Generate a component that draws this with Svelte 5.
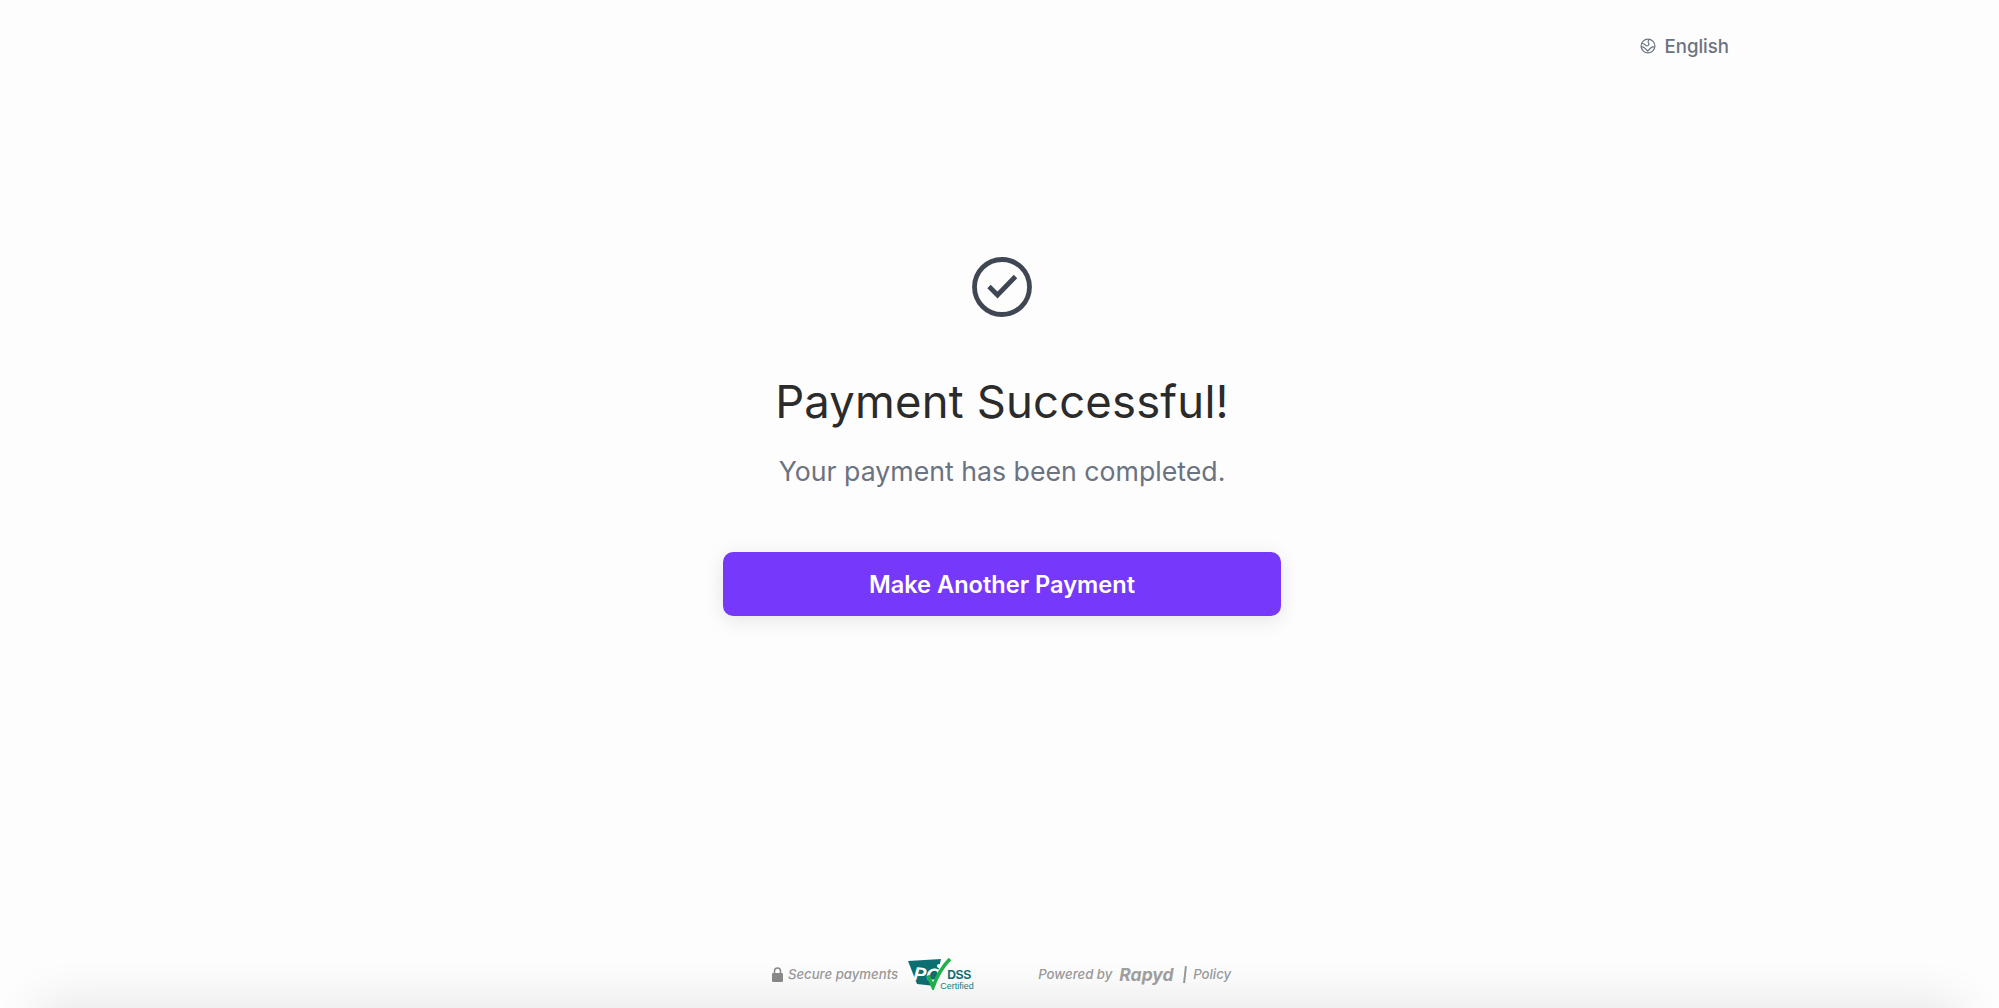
<script>
  const title = 'Payment Successful!';
</script>

<div class="page">
  <header class="top">
    <div class="lang">
      <svg class="globe" viewBox="0 0 16 16" width="16" height="16" fill="none" stroke="#6b7280" stroke-width="1.2" stroke-linecap="round" stroke-linejoin="round">
        <circle cx="8" cy="8" r="6.9"/>
        <path d="M2 5.500c1.600.2 2.600.6 3.500 1.600.8.9 1.800 1 2.600.5.7-.5 1-1.200 .7-2.100-.3-.8-.9-1.300-.7-2.100.1-.5.4-1 .8-1.500"/>
        <path d="M1.300 9c1.500-.2 2.500.2 3.400 1.100l3 2.900 3.300-3.200c.7-.7 1.700-1 3.400-.8"/>
      </svg>
      <span>English</span>
    </div>
  </header>

  <main class="main">
    <svg class="check" viewBox="0 0 60 60" width="60" height="60" fill="none" stroke="#3f4654">
      <circle cx="30" cy="30" r="27.500" stroke-width="4.800"/>
      <path d="M17 29.500l8.500 8.500 18-18.500" stroke-width="4.800"/>
    </svg>
    <h1>{title}</h1>
    <p>Your payment has been completed.</p>
    <button type="button">Make Another Payment</button>
  </main>

  <footer class="foot">
    <div class="secure">
      <svg class="lock" viewBox="0 0 11 15" width="11" height="15" fill="#8a8a8a">
        <rect x="0" y="6" width="11" height="9" rx="1.300"/>
        <path d="M2.500 6.500V4a3 3 0 0 1 6 0v2.500" fill="none" stroke="#8a8a8a" stroke-width="1.500"/>
      </svg>
      <em>Secure payments</em>
      <span class="pci">
        <svg viewBox="0 0 64 32" width="64" height="32">
          <path d="M0 3l33-2-6 27-18-2z" fill="#0e6f72"/>
          <text x="5" y="22" class="pcitext" transform="rotate(5 5 22)">PC</text>
          <circle cx="31" cy="8" r="2" fill="#fff"/>
          <path d="M20 17.500l5 11.500C29 18 34 9 42 1" fill="none" stroke="#22b14c" stroke-width="3.600"/>
        </svg>
        <span class="dss">DSS</span>
        <span class="cert">Certified</span>
      </span>
    </div>
    <div class="power">
      <em>Powered by</em>
      <strong>Rapyd</strong>
      <i class="bar"></i>
      <em>Policy</em>
    </div>
  </footer>
  <div class="edge"></div>
</div>

<style>
  :global(body) {
    margin: 0;
    background: #fdfdfd;
  }
  .page {
    height: 1008px;
    overflow: hidden;
    display: flex;
    flex-direction: column;
    align-items: center;
    font-family: Inter, "Liberation Sans", sans-serif;
    padding-left: 5px;
    box-sizing: border-box;
  }
  .top {
    width: 1454px;
    height: 92px;
    display: flex;
    justify-content: flex-end;
    align-items: flex-start;
    flex: none;
  }
  .lang {
    display: flex;
    align-items: center;
    gap: 9px;
    margin-top: 35px;
    height: 22px;
    color: #6b7280;
    font-size: 18.6px;
    font-weight: 500;
    line-height: 22px;
  }
  .globe {
    display: block;
  }
  .main {
    display: flex;
    flex-direction: column;
    align-items: center;
    padding-top: 165px;
    flex: 1;
  }
  .check {
    display: block;
  }
  h1 {
    margin: 58px 0 0;
    font-size: 45.4px;
    font-weight: 400;
    line-height: 54px;
    color: #2b2b2b;
    letter-spacing: 0.2px;
  }
  p {
    margin: 25px 0 0;
    font-size: 26.7px;
    line-height: 34px;
    color: #6b7280;
  }
  button {
    margin-top: 64px;
    width: 558px;
    height: 64px;
    border: 0;
    border-radius: 10px;
    background: #7638fa;
    color: #fff;
    font: 600 23.6px Inter, "Liberation Sans", sans-serif;
    box-shadow: 0 4px 20px rgba(0, 0, 0, 0.1);
  }
  .foot {
    display: flex;
    align-items: center;
    gap: 69px;
    height: 36px;
    margin-bottom: 16px;
    margin-left: -1px;
    color: #9a9a9a;
    font-size: 13.2px;
    flex: none;
  }
  em {
    font-style: italic;
    font-weight: 500;
  }
  .secure {
    display: flex;
    align-items: center;
    gap: 5px;
  }
  .lock {
    display: block;
    flex: none;
  }
  .pci {
    position: relative;
    display: block;
    width: 64px;
    height: 32px;
    margin-left: 5px;
  }
  .pci svg {
    display: block;
  }
  .pcitext {
    font: italic 700 19px "Liberation Sans", sans-serif;
    fill: #fff;
  }
  .dss {
    position: absolute;
    left: 39px;
    top: 10px;
    color: #0e6f72;
    font: 700 12px "Liberation Sans", sans-serif;
    letter-spacing: -0.3px;
  }
  .cert {
    position: absolute;
    left: 32px;
    top: 23px;
    color: #1a7f80;
    font: 400 9px "Liberation Sans", sans-serif;
  }
  .power {
    display: flex;
    align-items: center;
    gap: 5px;
    margin-left: -3px;
  }
  strong {
    font-size: 17.5px;
    font-weight: 700;
    font-style: italic;
    color: #a0a0a0;
    margin-left: 2px;
    margin-right: 1px;
  }
  .bar {
    width: 1.500px;
    height: 17px;
    background: #9a9a9a;
    transform: rotate(6deg);
    margin: 0 3px 0 4px;
  }
  .edge {
    position: absolute;
    left: 40px;
    right: 40px;
    top: 1008px;
    height: 30px;
    box-shadow: 0 0 50px rgba(0, 0, 0, 0.14);
  }
</style>
